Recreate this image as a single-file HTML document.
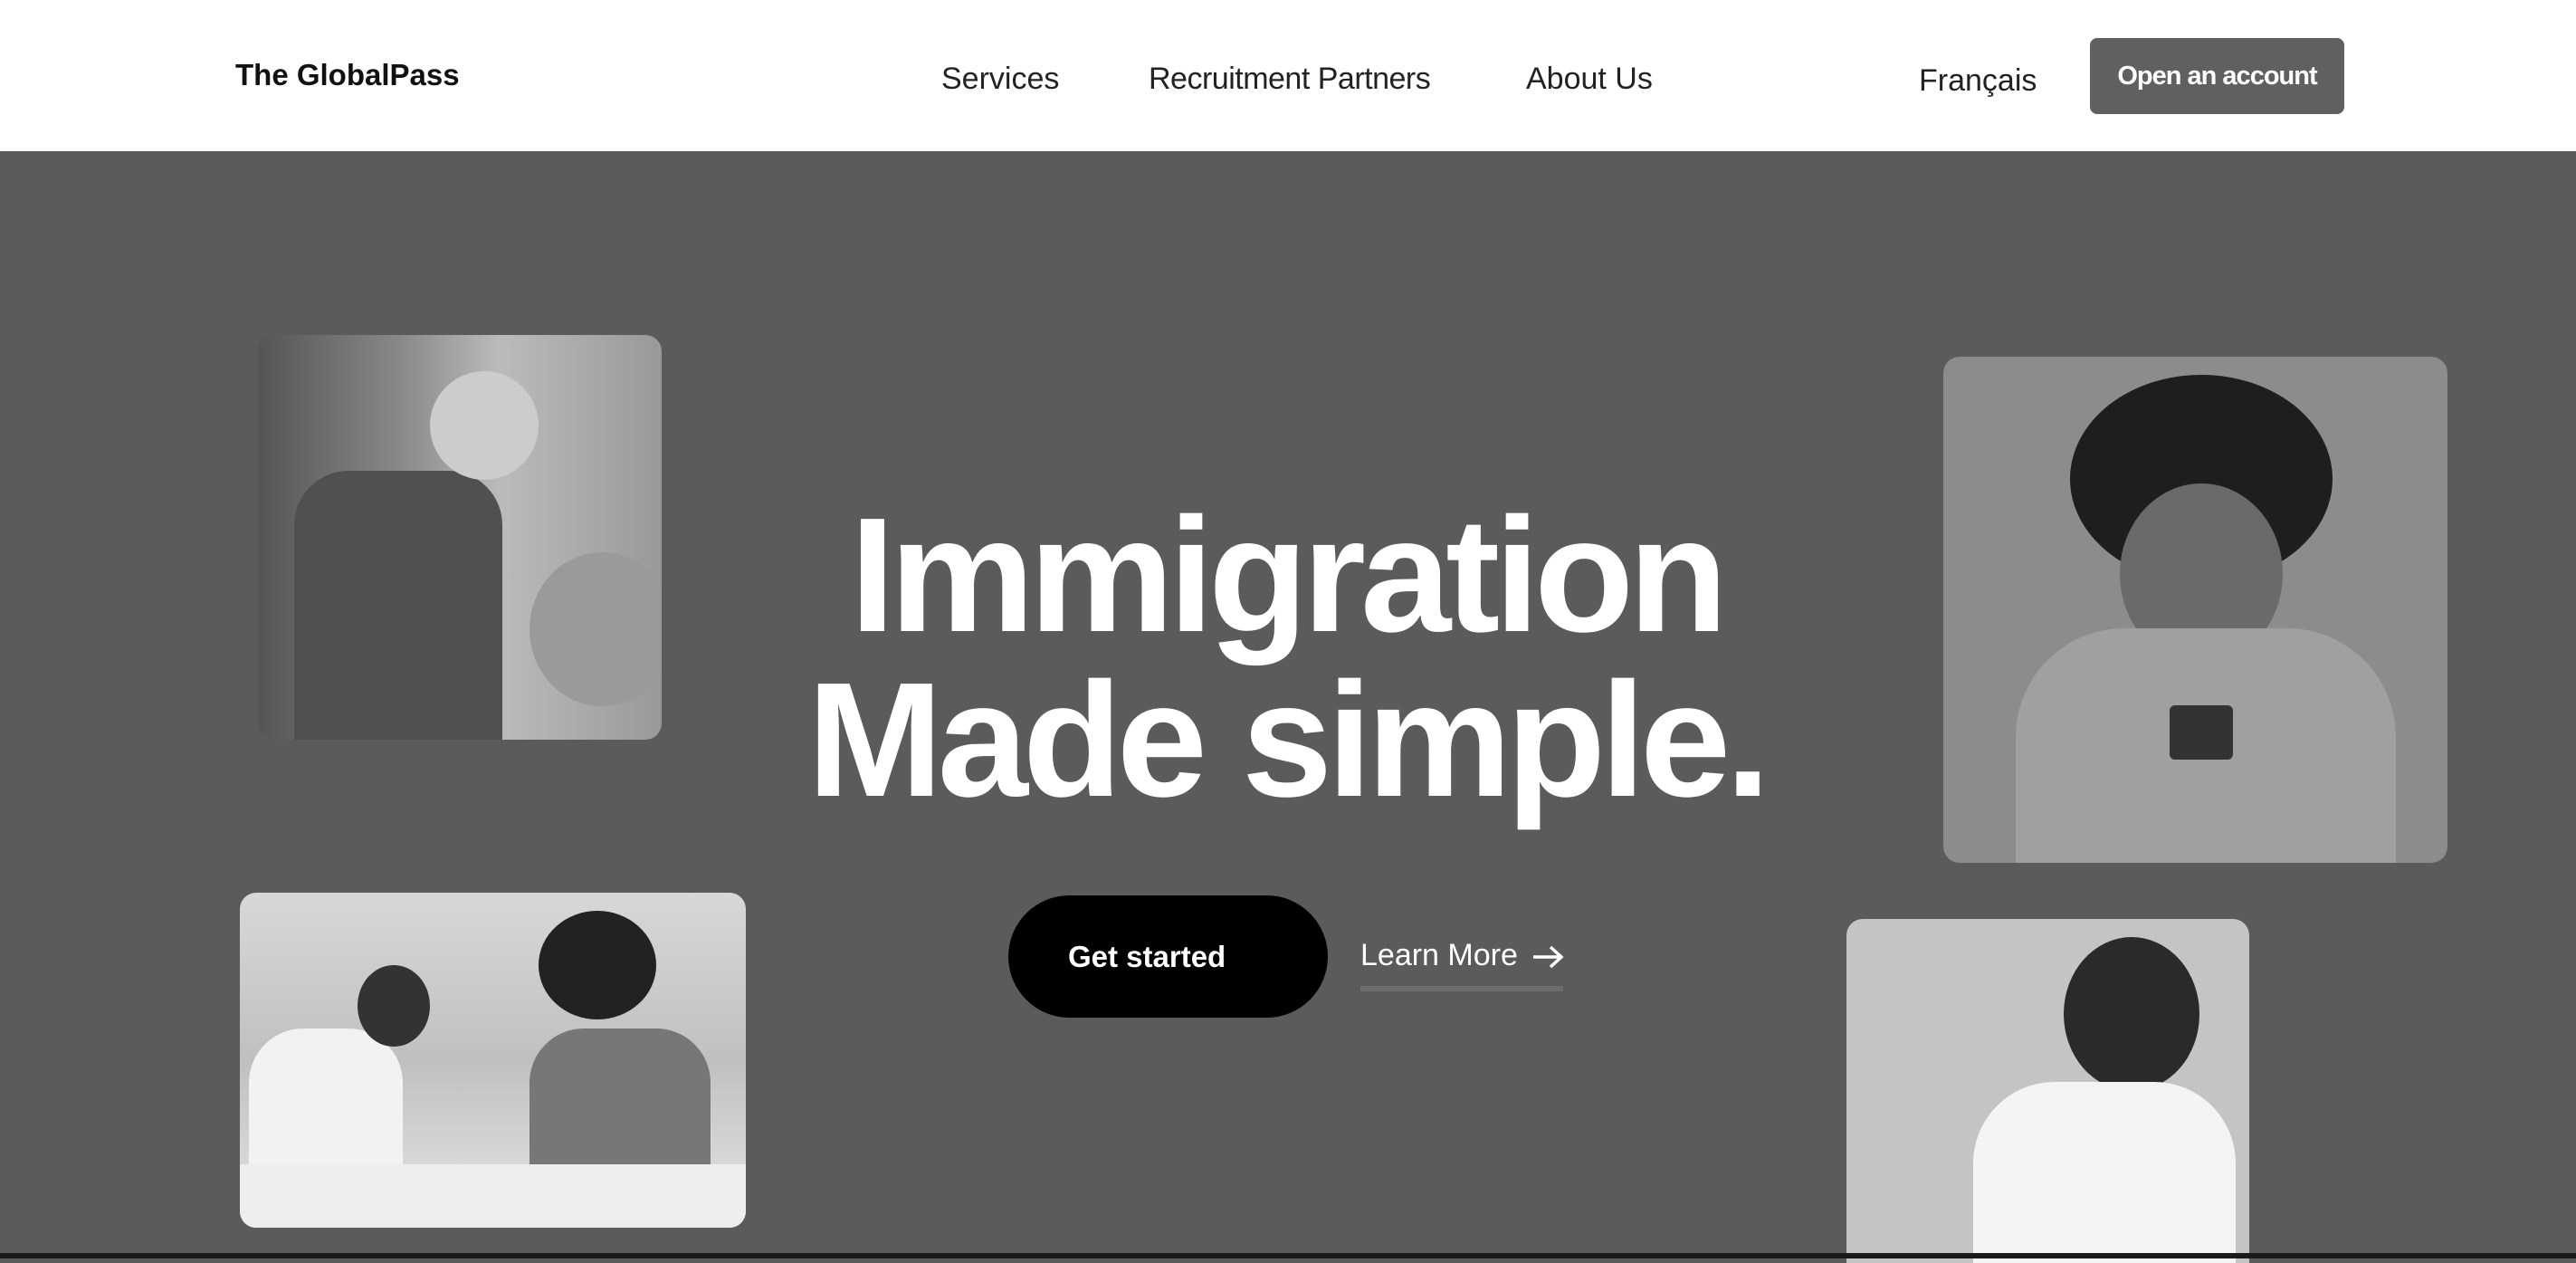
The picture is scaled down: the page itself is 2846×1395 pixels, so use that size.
<!DOCTYPE html>
<html><head><meta charset="utf-8"><style>
*{margin:0;padding:0;box-sizing:border-box}
body{width:2846px;height:1390px;overflow:hidden;background:#5b5b5b;font-family:"Liberation Sans",sans-serif;position:relative}
header{position:absolute;left:0;top:0;width:2846px;height:167px;background:#fff}
.t{position:absolute;white-space:nowrap}
.nav{font-size:34px;color:#222;top:68px}
.img{position:absolute;border-radius:18px;overflow:hidden}
</style></head><body>
<header>
<div class="t" style="left:260px;top:64px;font-size:33px;font-weight:bold;color:#111">The GlobalPass</div>
<div class="t nav" style="left:1040px">Services</div>
<div class="t nav" style="left:1269px;letter-spacing:-0.5px">Recruitment Partners</div>
<div class="t nav" style="left:1686px">About&nbsp;Us</div>
<div class="t nav" style="left:2120px;top:70px">Français</div>
<div style="position:absolute;left:2309px;top:42px;width:281px;height:84px;background:#606060;border-radius:8px;color:#fff;font-size:29px;font-weight:bold;text-align:center;line-height:84px;letter-spacing:-1px">Open an account</div>
</header>
<div class="img" style="left:285px;top:370px;width:446px;height:447px;background:linear-gradient(90deg,#555 0%,#888 35%,#bbb 60%,#999 100%)">
<div style="position:absolute;left:40px;top:150px;width:230px;height:297px;background:#505050;border-radius:60px 60px 0 0"></div>
<div style="position:absolute;left:190px;top:40px;width:120px;height:120px;background:#ccc;border-radius:50%"></div>
<div style="position:absolute;left:300px;top:240px;width:160px;height:170px;background:#9a9a9a;border-radius:50%"></div>
</div>
<div class="img" style="left:265px;top:986px;width:559px;height:370px;background:linear-gradient(180deg,#d8d8d8 0%,#c0c0c0 50%,#e6e6e6 100%)">
<div style="position:absolute;left:10px;top:150px;width:170px;height:220px;background:#f2f2f2;border-radius:60px 60px 0 0"></div>
<div style="position:absolute;left:130px;top:80px;width:80px;height:90px;background:#333;border-radius:50%"></div>
<div style="position:absolute;left:330px;top:20px;width:130px;height:120px;background:#222;border-radius:50%"></div>
<div style="position:absolute;left:320px;top:150px;width:200px;height:180px;background:#777;border-radius:60px 60px 0 0"></div>
<div style="position:absolute;left:0;top:300px;width:559px;height:70px;background:#eee"></div>
</div>
<div class="img" style="left:2147px;top:394px;width:557px;height:559px;background:#8c8c8c">
<div style="position:absolute;left:140px;top:20px;width:290px;height:230px;background:#1e1e1e;border-radius:50%"></div>
<div style="position:absolute;left:195px;top:140px;width:180px;height:200px;background:#6a6a6a;border-radius:50%"></div>
<div style="position:absolute;left:80px;top:300px;width:420px;height:300px;background:#a0a0a0;border-radius:120px 120px 0 0"></div>
<div style="position:absolute;left:250px;top:385px;width:70px;height:60px;background:#333;border-radius:6px"></div>
</div>
<div class="img" style="left:2040px;top:1015px;width:445px;height:380px;background:#c4c4c4;border-radius:18px 18px 0 0">
<div style="position:absolute;left:240px;top:20px;width:150px;height:170px;background:#2a2a2a;border-radius:50%"></div>
<div style="position:absolute;left:140px;top:180px;width:290px;height:220px;background:#f4f4f4;border-radius:90px 90px 0 0"></div>
</div>
<div style="position:absolute;left:0;width:2842px;text-align:center;top:545px;font-size:180px;font-weight:bold;color:#fff;letter-spacing:-6px;line-height:182px">Immigration<br>Made simple.</div>
<div style="position:absolute;left:1114px;top:989px;width:353px;height:135px;background:#000;border-radius:68px;color:#fff;font-size:33px;line-height:135px;padding-left:66px;font-weight:bold">Get started</div>
<div class="t" style="left:1503px;top:1036px;font-size:34px;color:#fff">Learn More</div>
<svg style="position:absolute;left:1692px;top:1043px" width="36" height="28" viewBox="0 0 36 28"><path d="M2 14H33M21 3L33 14L21 25" stroke="#fff" stroke-width="3.5" fill="none"/></svg>
<div style="position:absolute;left:1503px;top:1089px;width:224px;height:6px;background:#6c6c6c"></div>
<div style="position:absolute;left:0;top:1384px;width:2846px;height:6px;background:#1a1a1a"></div>
</body></html>
